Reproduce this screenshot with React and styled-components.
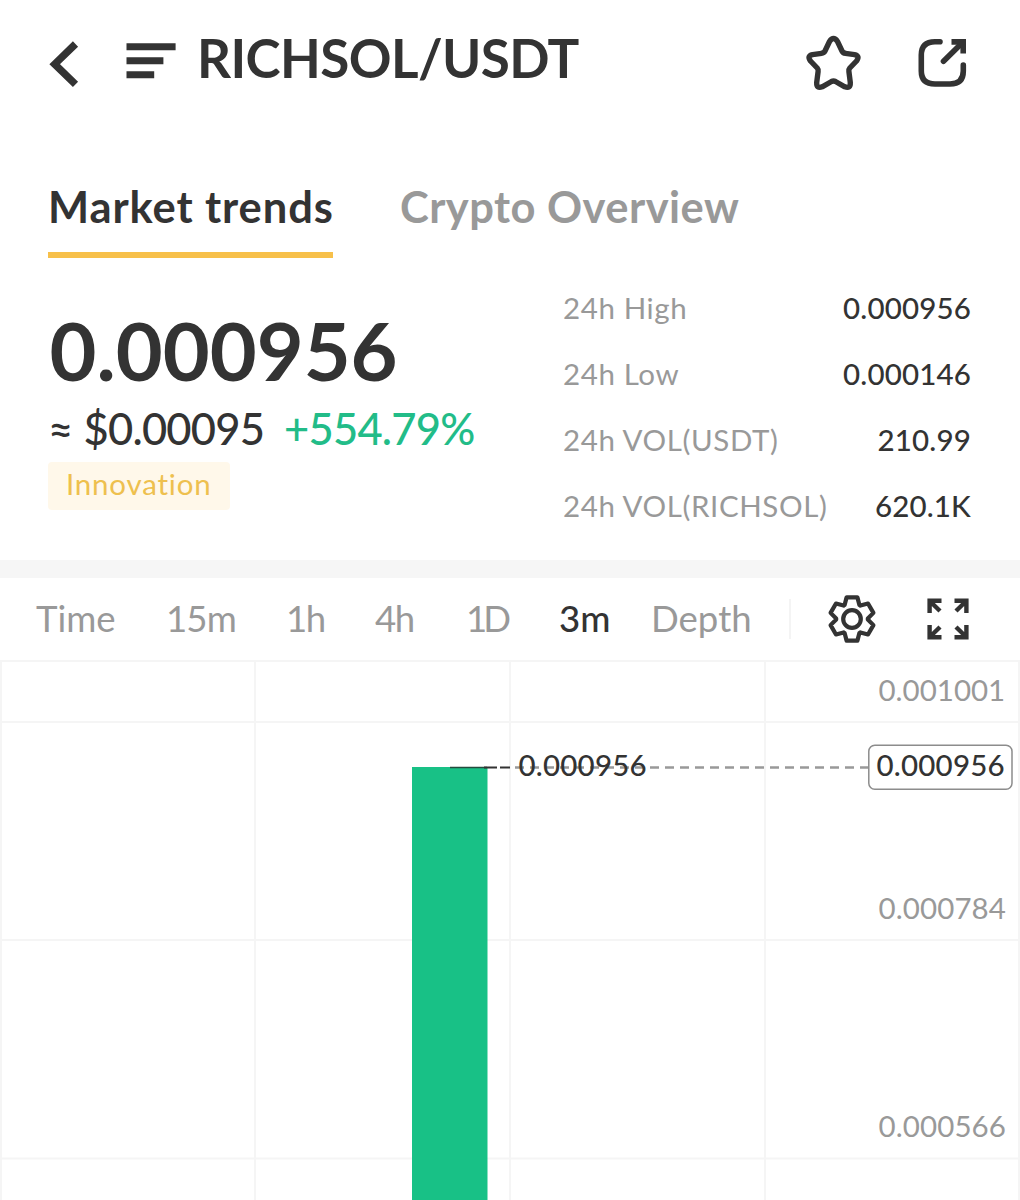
import React from "react";
import styled, { createGlobalStyle } from "styled-components";

const GlobalStyle = createGlobalStyle`
  * { box-sizing: border-box; }
  body { margin: 0; background: #fff; }
`;

const Page = styled.main`
  width: 1020px;
  height: 1200px;
  overflow: hidden;
  display: flex;
  flex-direction: column;
  background: #fff;
  color: #333;
  font-family: Lato, "Liberation Sans", sans-serif;
  white-space: nowrap;
`;

const Header = styled.header`
  display: flex;
  align-items: flex-start;
  height: 160px;
  padding: 30px 48px 0;
`;

const Icon = styled.svg`
  display: block;
  flex: none;
  fill: none;
  stroke: #333;
  margin-left: ${(p) => p.$gap || 0}px;
`;

const Pair = styled.h1`
  flex: 1;
  margin: 0 0 0 21px;
  font-size: 53px;
  line-height: 55px;
  font-weight: 700;
  letter-spacing: ${(p) => p.$spacing}px;
`;

const Tabs = styled.nav`
  display: flex;
  gap: 67px;
  height: 98px;
  padding-left: 48px;
`;

const Tab = styled.div`
  width: ${(p) => p.$width}px;
  padding-top: 18px;
  font-size: 43.5px;
  line-height: 56px;
  font-weight: 700;
  letter-spacing: ${(p) => p.$spacing}px;
  color: ${(p) => (p.$active ? "#333" : "#999")};
  border-bottom: 6px solid ${(p) => (p.$active ? "#f7c04a" : "transparent")};
`;

const Summary = styled.section`
  display: flex;
  justify-content: space-between;
  height: 302px;
  padding: 0 49px 0 48px;
`;

const Quote = styled.div`
  padding-top: 52px;
`;

const Price = styled.div`
  padding-left: 1.5px;
  font-size: 81px;
  line-height: 80px;
  font-weight: 700;
`;

const Converted = styled.div`
  display: flex;
  gap: 20px;
  padding-top: 13px;
  font-size: 43.5px;
  line-height: 50px;
  font-weight: 500;
  word-spacing: 1px;
  letter-spacing: ${(p) => p.$spacing}px;
`;

const Change = styled.span`
  color: #22bc88;
`;

const Badge = styled.div`
  width: 182px;
  height: 48px;
  margin-top: 9px;
  padding-left: 18px;
  border-radius: 4px;
  background: #fff8ea;
  color: #eec04e;
  font-size: 29.5px;
  line-height: 43px;
  letter-spacing: ${(p) => p.$spacing}px;
`;

const Stats = styled.dl`
  width: 408px;
  margin: 0;
  padding-top: 17px;
`;

const Stat = styled.div`
  display: flex;
  justify-content: space-between;
  height: 66px;
  font-size: 29.5px;
  line-height: 66px;
`;

const StatLabel = styled.dt`
  color: #999;
  letter-spacing: ${(p) => p.$spacing}px;
`;

const StatValue = styled.dd`
  margin: 0;
  font-weight: 500;
  letter-spacing: ${(p) => p.$spacing}px;
`;

const Band = styled.div`
  height: 18px;
  background: #f6f6f6;
`;

const Toolbar = styled.div`
  display: flex;
  align-items: center;
  height: 82px;
  padding-left: 36px;
`;

const Intervals = styled.div`
  display: grid;
  grid-template-columns: 130px 120px 89px 91px 93px 92px 138px;
  padding-bottom: 2px;
`;

const Interval = styled.span`
  font-size: 36.6px;
  line-height: 52px;
  letter-spacing: ${(p) => p.$spacing}px;
  font-weight: ${(p) => (p.$active ? 500 : 400)};
  color: ${(p) => (p.$active ? "#333" : "#999")};
`;

const Rule = styled.i`
  width: 2px;
  height: 40px;
  background: #f4f4f4;
`;

const Chart = styled.svg`
  display: block;
  flex: none;
  font-family: Lato, "Liberation Sans", sans-serif;
  font-size: 29.5px;
`;

const Tick = styled.text`
  fill: ${(p) => (p.$strong ? "#333" : "#999")};
  font-weight: ${(p) => (p.$strong ? 500 : 400)};
  letter-spacing: ${(p) => p.$spacing || 0}px;
`;

const stats = [
  ["24h High", "0.000956"],
  ["24h Low", "0.000146"],
  ["24h VOL(USDT)", "210.99"],
  ["24h VOL(RICHSOL)", "620.1K"],
];

const intervals = [
  { name: "Time", spacing: 0 },
  { name: "15m", spacing: -0.9 },
  { name: "1h", spacing: -1.4 },
  { name: "4h", spacing: -1.4 },
  { name: "1D", spacing: -4 },
  { name: "3m", spacing: 0 },
  { name: "Depth", spacing: 0 },
];

const gearPath = (() => {
  const tooth = [[-7.4, -14], [-5.4, -21.6], [5.4, -21.6], [7.4, -14]];
  const points = [];
  for (let i = 0; i < 6; i++) {
    const a = (i * Math.PI) / 3;
    tooth.forEach(([x, y]) =>
      points.push(
        `${(x * Math.cos(a) - y * Math.sin(a)).toFixed(2)} ${(x * Math.sin(a) + y * Math.cos(a)).toFixed(2)}`
      )
    );
  }
  return `M${points.join("L")}Z`;
})();

export default function App() {
  return (
    <Page>
      <GlobalStyle />
      <Header>
        <Icon width="32" height="66" viewBox="48 30 32 66" strokeWidth="7.4">
          <path d="M75.5 44 54.7 64.2 75.5 84.4" />
        </Icon>
        <Icon $gap={46} width="50" height="66" viewBox="126 30 50 66" strokeWidth="7">
          <path d="M126.5 46.7H175.6M126.5 60.7H163.4M126.5 74.7H154.2" />
        </Icon>
        <Pair $spacing={-0.6}>RICHSOL/USDT</Pair>
        <Icon width="58" height="66" viewBox="805 30 58 66" strokeWidth="5.4" strokeLinejoin="round">
          <path d="M829.5 41.5Q833.5 35.5 837.5 41.5L842 51Q843 53 845.5 53.3L854.5 54.7Q860.3 56 856.5 61L849.8 68Q848.5 69.5 848.9 71.5L850.3 82.5Q850.5 89 844.8 86.8L835.5 81.5Q833.5 80.5 831.5 81.5L822.2 86.8Q816.5 89 816.7 82.5L818.1 71.5Q818.5 69.5 817.2 68L810.5 61Q806.7 56 812.5 54.7L821.5 53.3Q824 53 825 51Z" />
        </Icon>
        <Icon $gap={55} width="54" height="66" viewBox="918 30 54 66" strokeWidth="5.6">
          <path strokeLinecap="round" d="M940 41.7H935Q921.3 41.7 921.3 55V71Q921.3 84 935 84H950Q963.3 84 963.3 71V65M943.5 61.3 961 44" />
          <path d="M951.5 41.9H963.2V53.5" />
        </Icon>
      </Header>

      <Tabs>
        <Tab $active $width={285} $spacing={0.9}>Market trends</Tab>
        <Tab $width={340} $spacing={0.45}>Crypto Overview</Tab>
      </Tabs>

      <Summary>
        <Quote>
          <Price>0.000956</Price>
          <Converted $spacing={-0.8}>
            <span>≈ $0.00095</span>
            <Change>+554.79%</Change>
          </Converted>
          <Badge $spacing={0.8}>Innovation</Badge>
        </Quote>
        <Stats>
          {stats.map(([label, value]) => (
            <Stat key={label}>
              <StatLabel $spacing={0.6}>{label}</StatLabel>
              <StatValue $spacing={0.15}>{value}</StatValue>
            </Stat>
          ))}
        </Stats>
      </Summary>

      <Band />

      <Toolbar>
        <Intervals>
          {intervals.map(({ name, spacing }) => (
            <Interval key={name} $active={name === "3m"} $spacing={spacing}>
              {name}
            </Interval>
          ))}
        </Intervals>
        <Rule />
        <Icon $gap={35} width="52" height="52" viewBox="-26 -26 52 52" strokeWidth="4.2" strokeLinejoin="round">
          <path d={gearPath} />
          <circle r="8.8" />
        </Icon>
        <Icon $gap={48} width="44" height="44" viewBox="-22 -22 44 44" strokeWidth="4.4">
          {[[1, 1], [-1, 1], [1, -1], [-1, -1]].map(([x, y]) => (
            <path key={`${x}${y}`} transform={`scale(${x} ${y})`} d="M-6.5-18.2H-18.4V-6M-18-17.8-8-8" />
          ))}
        </Icon>
      </Toolbar>

      <Chart width="1020" height="540" viewBox="0 660 1020 540">
        <path
          d="M0 661H1020M0 722H1020M0 940H1020M0 1158.5H1020M1 660V1200M255 660V1200M510 660V1200M765 660V1200M1019 660V1200"
          stroke="#f5f5f5"
          strokeWidth="2"
        />
        <rect x="412" y="767" width="75.5" height="433" fill="#18c186" />
        <path d="M450 767.5H487" stroke="#234c3e" strokeWidth="1.5" />
        <path d="M484 767.5H497M500 767.5H510" stroke="#333" strokeWidth="2" />
        <path d="M515 767.5H869" stroke="#999" strokeWidth="2.6" strokeDasharray="9 6" />
        <Tick $strong $spacing={0.2} x="518.5" y="776">0.000956</Tick>
        <rect x="868.8" y="745.3" width="143.2" height="44" rx="6" fill="#fff" stroke="#8c8c8c" strokeWidth="1.5" />
        <Tick $strong $spacing={0.2} x="876.5" y="776">0.000956</Tick>
        <Tick x="878.5" y="701">0.001001</Tick>
        <Tick $spacing={0.1} x="878.5" y="919">0.000784</Tick>
        <Tick $spacing={0.1} x="878.5" y="1137">0.000566</Tick>
      </Chart>
    </Page>
  );
}
